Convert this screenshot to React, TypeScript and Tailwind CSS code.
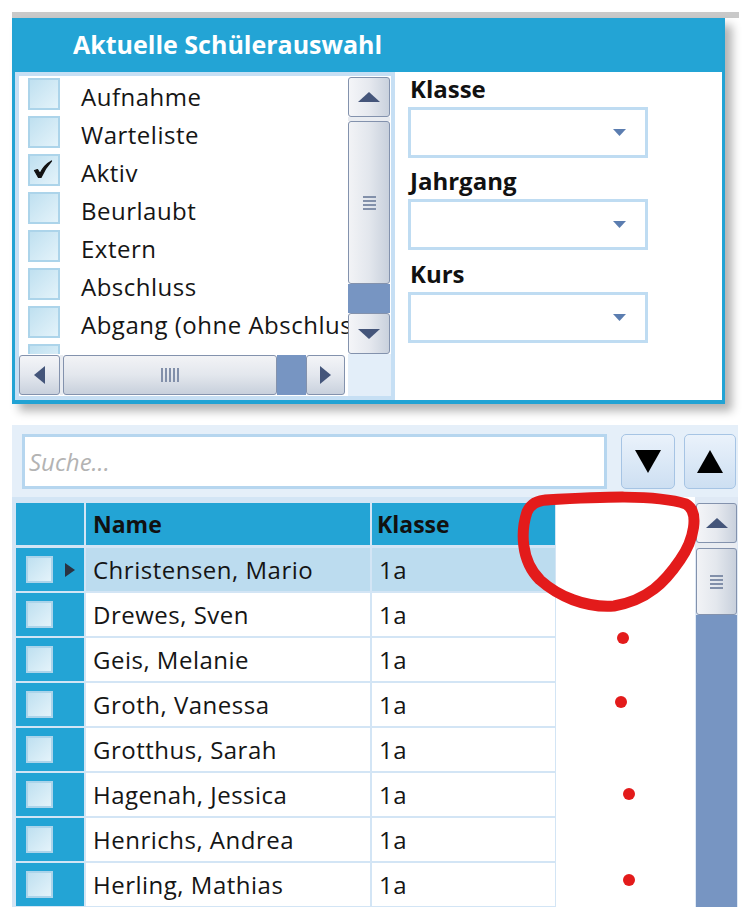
import React from 'react';

const BLUE = 'bg-[#23a4d5]';

const STATUS = ['Aufnahme', 'Warteliste', 'Aktiv', 'Beurlaubt', 'Extern', 'Abschluss', 'Abgang (ohne Abschluss)'];

const STUDENTS = [
  'Christensen, Mario',
  'Drewes, Sven',
  'Geis, Melanie',
  'Groth, Vanessa',
  'Grotthus, Sarah',
  'Hagenah, Jessica',
  'Henrichs, Andrea',
  'Herling, Mathias',
];

type Dir = 'up' | 'down' | 'left' | 'right';

function Arrow({ dir, color = '#44557a' }: { dir: Dir; color?: string }) {
  if (dir === 'up' || dir === 'down') {
    return (
      <svg width="24" height="12" viewBox="0 0 24 12">
        <polygon points={dir === 'up' ? '1,11 12,1 23,11' : '1,1 12,11 23,1'} fill={color} />
      </svg>
    );
  }
  return (
    <svg width="13" height="20" viewBox="0 0 13 20">
      <polygon points={dir === 'left' ? '12,1 1,10 12,19' : '1,1 12,10 1,19'} fill={color} />
    </svg>
  );
}

// Win7-artige Scrollbar-Taste
function ScrollButton({ dir, className }: { dir: Dir; className: string }) {
  const vertical = dir === 'up' || dir === 'down';
  return (
    <div
      className={`flex items-center justify-center rounded-[3px] border border-[#8392ad] ${
        vertical
          ? 'bg-gradient-to-r from-[#f4f5f8] via-[#e6e9ef] to-[#c9d1dd]'
          : 'bg-gradient-to-b from-[#f4f5f8] via-[#e3e7ee] to-[#c9d1dd]'
      } ${className}`}
    >
      <Arrow dir={dir} />
    </div>
  );
}

function Thumb({ vertical, className }: { vertical: boolean; className: string }) {
  return (
    <div
      className={`flex items-center justify-center rounded-[3px] border border-[#8392ad] ${
        vertical
          ? 'flex-col gap-[2px] bg-gradient-to-r from-[#f2f3f6] via-[#e3e7ed] to-[#c8d0dc]'
          : 'flex-row gap-[2px] bg-gradient-to-b from-[#f2f3f6] via-[#e3e7ed] to-[#c8d0dc]'
      } ${className}`}
    >
      {[0, 1, 2, 3, 4].slice(0, vertical ? 4 : 5).map((i) =>
        vertical ? (
          <div key={i} className="h-[2px] w-[13px] bg-[#8290aa]" />
        ) : (
          <div key={i} className="h-[14px] w-[2px] bg-[#8290aa]" />
        )
      )}
    </div>
  );
}

function Check({ checked, small }: { checked?: boolean; small?: boolean }) {
  return (
    <div
      className={`relative shrink-0 border-2 border-[#acd4ea] bg-gradient-to-br from-[#bfe0f0] to-[#e4f3fa] ${
        small ? 'h-[27px] w-[27px]' : 'h-[32px] w-[32px]'
      }`}
    >
      {checked && (
        <svg className="absolute left-[2px] top-[3px]" width="22" height="22" viewBox="0 0 22 22">
          <path d="M2.5 11.5 L5.5 10.5 L8 14.5 Q12 6 19.5 2 Q13 9 9 18.5 L6.5 18.5 Z" fill="#121212" stroke="#121212" strokeWidth="1.2" strokeLinejoin="round" />
        </svg>
      )}
    </div>
  );
}

function Combo() {
  return (
    <div className="flex h-[51px] w-[240px] items-center justify-end border-[3px] border-[#bfdcf2] bg-white pr-[19px]">
      <svg width="13" height="7" viewBox="0 0 13 7">
        <polygon points="0,0 13,0 6.5,7" fill="#5b7db0" />
      </svg>
    </div>
  );
}

function FilterLabel({ text, h }: { text: string; h: string }) {
  return (
    <div className={`flex items-end pb-[7px] pl-[2px] text-[24px] leading-[22px] font-bold text-[#111] ${h}`}>{text}</div>
  );
}

function StatusList() {
  return (
    <div className="flex w-[380px] flex-col border-[4px] border-[#c6dff4] bg-white">
      <div className="flex h-[278px]">
        <div className="flex w-[329px] flex-col overflow-hidden pl-[9px] pt-[2px]">
          {STATUS.map((s, i) => (
            <div key={s} className="flex h-[38px] shrink-0 items-start gap-[21px]">
              <Check checked={i === 2} />
              <span className="mt-[3px] whitespace-nowrap text-[24px] leading-[32px] tracking-[0.5px] text-[#151515]">{s}</span>
            </div>
          ))}
          {/* angeschnittener nächster Eintrag */}
          <div className="flex h-[38px] shrink-0 items-start">
            <Check />
          </div>
        </div>
        <div className="flex w-[43px] flex-col pr-[1px] pt-[1px]">
          <ScrollButton dir="up" className="h-[40px] shrink-0" />
          <div className="h-[4px] shrink-0 bg-[#e9ecf1]" />
          <Thumb vertical className="h-[163px] shrink-0" />
          <div className="flex-1 bg-[#7795c2]" />
          <ScrollButton dir="down" className="h-[41px] shrink-0" />
        </div>
      </div>
      <div className="flex h-[42px]">
        <div className="flex w-[329px] items-stretch py-[1px] pr-[3px]">
          <ScrollButton dir="left" className="w-[41px] shrink-0" />
          <div className="w-[3px] shrink-0 bg-[#e9ecf1]" />
          <Thumb vertical={false} className="w-[214px] shrink-0" />
          <div className="flex-1 bg-[#7795c2]" />
          <ScrollButton dir="right" className="w-[39px] shrink-0" />
        </div>
        <div className="flex-1 bg-[#e3eef9]" />
      </div>
    </div>
  );
}

function GridRow({ name, selected }: { name: string; selected: boolean }) {
  const cell = selected ? 'bg-[#bcdcef]' : 'bg-white';
  return (
    <div className="flex h-[43px] shrink-0 gap-[2px]">
      <div className={`flex w-[68px] items-center pl-[10px] ${BLUE}`}>
        <Check small />
        {selected && (
          <svg className="ml-[11px]" width="12" height="16" viewBox="0 0 12 16">
            <polygon points="1,1 11,8 1,15" fill="#2a3342" />
          </svg>
        )}
      </div>
      <div className={`flex w-[284px] items-center pl-[7px] text-[24px] tracking-[0.5px] text-[#151515] ${cell}`}>{name}</div>
      <div className={`flex w-[183px] items-center pl-[7px] text-[24px] tracking-[0.5px] text-[#151515] ${cell}`}>1a</div>
    </div>
  );
}

export default function App() {
  return (
    <div className="relative h-[916px] w-[752px] overflow-hidden bg-white font-['Open_Sans','Noto_Sans',sans-serif]">
      {/* Aktuelle Schülerauswahl */}
      <div className="pl-[12px] pt-[12px]">
        <div className="h-[6px] w-[727px] bg-[#c9c9c9]" />
        <div className="flex h-[386px] w-[713px] flex-col border-x-[3px] border-b-[4px] border-[#22a3d4] bg-white shadow-[7px_7px_9px_rgba(0,0,0,0.3)]">
          <div className={`flex h-[54px] shrink-0 items-center pl-[58px] text-[25px] font-bold text-white ${BLUE}`}>
            Aktuelle Schülerauswahl
          </div>
          <div className="flex flex-1">
            <StatusList />
            <div className="flex flex-1 flex-col pl-[13px]">
              <FilterLabel text="Klasse" h="h-[35px]" />
              <Combo />
              <FilterLabel text="Jahrgang" h="h-[41px]" />
              <Combo />
              <FilterLabel text="Kurs" h="h-[42px]" />
              <Combo />
            </div>
          </div>
        </div>
      </div>

      {/* Suche + Schülerliste */}
      <div className="ml-[12px] mt-[21px] w-[726px] bg-[#e5eff9] pt-[9px]">
        <div className="flex h-[55px] items-stretch pl-[10px]">
          <div className="flex w-[585px] items-center border-[3px] border-[#b6d6ef] bg-white pl-[4px] text-[24px] italic text-[#b3b3b3]">
            Suche...
          </div>
          <div className="ml-[14px] flex w-[54px] items-center justify-center rounded-[5px] border border-[#a6c4e4] bg-gradient-to-b from-[#eaf2fb] to-[#cddff2]">
            <svg width="26" height="23" viewBox="0 0 26 23">
              <polygon points="0,0 26,0 13,23" fill="#000" />
            </svg>
          </div>
          <div className="ml-[9px] flex w-[52px] items-center justify-center rounded-[5px] border border-[#a6c4e4] bg-gradient-to-b from-[#eaf2fb] to-[#cddff2]">
            <svg width="26" height="23" viewBox="0 0 26 23">
              <polygon points="0,23 26,23 13,0" fill="#000" />
            </svg>
          </div>
        </div>

        <div className="mt-[8px] flex h-[410px] overflow-hidden">
          <div className="flex w-[544px] flex-col gap-[2px] bg-[#d3e5f5] pl-[4px] pt-[6px]">
            <div className="mb-[1px] flex h-[42px] shrink-0 gap-[2px]">
              <div className={`w-[68px] ${BLUE}`} />
              <div className={`flex w-[284px] items-center pl-[7px] text-[23px] font-bold text-[#111] ${BLUE}`}>Name</div>
              <div className={`flex w-[183px] items-center pl-[5px] text-[23px] font-bold text-[#111] ${BLUE}`}>Klasse</div>
            </div>
            {STUDENTS.map((n, i) => (
              <GridRow key={n} name={n} selected={i === 0} />
            ))}
          </div>
          <div className="w-[139px] bg-white" />
          <div className="flex w-[43px] flex-col bg-[#dfe9f5] px-[1px] pt-[6px]">
            <ScrollButton dir="up" className="h-[40px] shrink-0" />
            <div className="h-[5px] shrink-0 bg-[#e9ecf1]" />
            <Thumb vertical className="h-[67px] shrink-0" />
            <div className="flex-1 bg-[#7795c2]" />
          </div>
        </div>
      </div>

      {/* Markierung (rot) */}
      <svg className="pointer-events-none absolute left-0 top-0" width="752" height="916" viewBox="0 0 752 916">
        <path
          d="M545 500 C 600 497, 655 494, 686 504 C 700 512, 694 540, 680 560 C 665 582, 648 600, 614 606 C 585 608, 558 596, 540 580 C 520 560, 521 530, 527 512 C 531 503, 538 500, 548 500"
          fill="none"
          stroke="#e31b1b"
          strokeWidth="11"
          strokeLinecap="round"
        />
        <circle cx="623" cy="638" r="6" fill="#e31b1b" />
        <circle cx="621" cy="702" r="6" fill="#e31b1b" />
        <circle cx="629" cy="794" r="6" fill="#e31b1b" />
        <circle cx="629" cy="880" r="6" fill="#e31b1b" />
      </svg>
    </div>
  );
}
